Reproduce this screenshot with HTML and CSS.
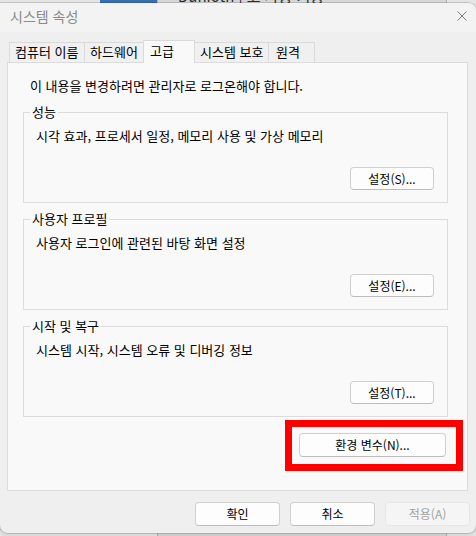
FILE: index.html
```html
<!DOCTYPE html>
<html lang="ko">
<head>
<meta charset="utf-8">
<title>시스템 속성</title>
<link rel="stylesheet" href="styles.css">
</head>
<body>
<div class="desktop">
  <div class="bg-blue"></div>
  <div class="bg-doc top"><span>Dunioth | 고 사용 기능</span></div>
  <div class="bg-doc bottom"><span>Powershell 관리 설정</span></div>

  <div class="window">
    <div class="titlebar">
      <span class="title">시스템 속성</span>
      <svg class="close" viewBox="0 0 10 10" width="10" height="10" aria-hidden="true">
        <path d="M0.5 0.5 L9.5 9.5 M9.5 0.5 L0.5 9.5" stroke="#7a7a7a" stroke-width="1" fill="none"/>
      </svg>
    </div>
    <div class="body">
      <div class="tabs">
        <div class="tab">컴퓨터 이름</div>
        <div class="tab">하드웨어</div>
        <div class="tab active">고급</div>
        <div class="tab">시스템 보호</div>
        <div class="tab">원격</div>
      </div>
      <div class="panel">
        <p class="intro">이 내용을 변경하려면 관리자로 로그온해야 합니다.</p>

        <section class="group">
          <span class="legend">성능</span>
          <p class="desc">시각 효과, 프로세서 일정, 메모리 사용 및 가상 메모리</p>
          <div class="btn-row"><button class="btn">설정(S)...</button></div>
        </section>

        <section class="group">
          <span class="legend">사용자 프로필</span>
          <p class="desc">사용자 로그인에 관련된 바탕 화면 설정</p>
          <div class="btn-row"><button class="btn">설정(E)...</button></div>
        </section>

        <section class="group">
          <span class="legend">시작 및 복구</span>
          <p class="desc">시스템 시작, 시스템 오류 및 디버깅 정보</p>
          <div class="btn-row"><button class="btn">설정(T)...</button></div>
        </section>

        <div class="env-row">
          <div class="env-wrap">
            <button class="btn env">환경 변수(N)...</button>
            <div class="highlight"></div>
          </div>
        </div>
      </div>
      <div class="footer">
        <button class="btn foot">확인</button>
        <button class="btn foot">취소</button>
        <button class="btn foot disabled">적용(A)</button>
      </div>
    </div>
  </div>
</div>
</body>
</html>
```

FILE: styles.css
```css
* { box-sizing: border-box; }

html, body {
  margin: 0;
  padding: 0;
}

body {
  width: 476px;
  height: 536px;
  overflow: hidden;
  background: #e7e7e7;
  font-family: "Noto Sans CJK KR", "Noto Sans", sans-serif;
  font-size: 13px;
  color: #000;
}

.desktop {
  position: relative;
  width: 476px;
  height: 536px;
  overflow: hidden;
}

.bg-blue {
  position: absolute;
  left: 100px;
  top: 0;
  width: 57px;
  height: 4px;
  background: #3a6fb3;
}

.bg-doc {
  position: absolute;
  left: 157px;
  width: 290px;
  background: #d9d9d9;
  border: 1px solid #b5b5b5;
  overflow: hidden;
  color: #2c2c2c;
  font-size: 15px;
  line-height: 18px;
  padding-left: 20px;
  white-space: nowrap;
}

.bg-doc.top {
  top: -14px;
  height: 18px;
}

.bg-doc.bottom {
  top: 531px;
  height: 20px;
  padding-top: 3px;
}

.window {
  position: absolute;
  left: 0;
  top: 3px;
  width: 476px;
  height: 530px;
  background: #efefef;
  border-radius: 0 8px 8px 8px;
  box-shadow: 0 0 0 1px rgba(0, 0, 0, 0.13), 0 2px 6px rgba(0, 0, 0, 0.12);
  display: flex;
  flex-direction: column;
  overflow: hidden;
}

.titlebar {
  height: 29px;
  flex: none;
  background: #f3f3f3;
  display: flex;
  justify-content: space-between;
  align-items: flex-start;
  padding: 4px 9px 0 10px;
}

.title {
  font-size: 14px;
  line-height: 18px;
  color: #8a8a8a;
}

.close {
  display: block;
  margin-top: 4px;
}

.body {
  flex: 1;
  display: flex;
  flex-direction: column;
  padding: 8px 8px 0 7px;
}

.tabs {
  display: flex;
  align-items: flex-end;
  height: 22px;
  padding-left: 2px;
}

.tab {
  flex: none;
  height: 20px;
  line-height: 18px;
  padding: 0 0 0 5px;
  border: 1px solid #dadada;
  border-bottom: 0;
  margin-right: -1px;
  background: #f0f0f0;
  white-space: nowrap;
  overflow: hidden;
}

.tab:nth-child(1) { width: 76px; }
.tab:nth-child(2) { width: 60px; }
.tab:nth-child(3) { width: 52px; }
.tab:nth-child(4) { width: 75px; }
.tab:nth-child(5) { width: 47px; padding-left: 7px; }

.tab.active {
  height: 23px;
  margin-bottom: -1px;
  padding: 1px 0 0 6px;
  background: #f9f9f9;
  position: relative;
  z-index: 1;
}

.panel {
  height: 429px;
  flex: none;
  background: #f9f9f9;
  border: 1px solid #dcdcdc;
  padding: 15px 19px 33px 15px;
  display: flex;
  flex-direction: column;
}

.intro {
  margin: 0 0 18px 7px;
  line-height: 16px;
}

.group {
  position: relative;
  border: 1px solid #dcdcdc;
  padding: 15px 13px 12px 12px;
  margin-bottom: 16px;
}

.legend {
  position: absolute;
  left: 6px;
  top: -9px;
  line-height: 16px;
  padding: 0 2px;
  background: #f9f9f9;
}

.desc {
  margin: 0 0 23px;
  line-height: 16px;
}

.btn-row {
  display: flex;
  justify-content: flex-end;
}

.btn {
  width: 84px;
  height: 23px;
  padding: 0;
  background: #fdfdfd;
  border: 1px solid #d0d0d0;
  border-bottom-color: #bdbdbd;
  border-radius: 4px;
  font-family: inherit;
  font-size: 12px;
  line-height: 20px;
  color: #000;
}

.env-row {
  display: flex;
  justify-content: flex-end;
  margin-right: 2px;
}

.env-wrap {
  position: relative;
}

.btn.env {
  width: 147px;
  height: 24px;
  display: block;
}

.highlight {
  position: absolute;
  left: -14px;
  right: -17px;
  top: -13px;
  bottom: -14px;
  border: 7px solid #ff0000;
}

.footer {
  display: flex;
  justify-content: flex-end;
  gap: 10px;
  padding: 11px 0 7px;
  margin-right: -2px;
}

.btn.foot {
  width: 85px;
  height: 24px;
}

.btn.disabled {
  background: #f5f5f5;
  border-color: #e6e6e6;
  color: #a2a2a2;
}
```
